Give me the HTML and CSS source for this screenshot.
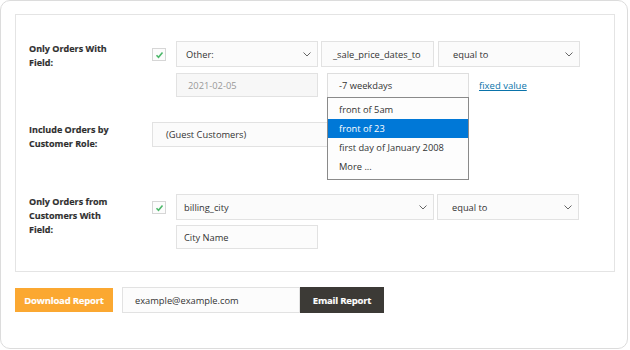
FILE: index.html
```html
<!DOCTYPE html>
<html>
<head>
<meta charset="utf-8">
<link rel="stylesheet" href="styles.css">
</head>
<body>
<div class="card">
  <div class="panel">
    <div class="row row-one">
      <div class="label">Only Orders With<br>Field:</div>
      <div class="check-cell"><span class="check"><svg width="9" height="8" viewBox="0 0 9 8"><polyline points="1.5,4.2 3.5,6.2 7.5,1.5" fill="none" stroke="#4cb86a" stroke-width="1.6"/></svg></span></div>
      <div class="controls">
        <div class="line">
          <div class="select sel-other"><span>Other:</span><svg class="chev" width="8" height="5" viewBox="0 0 8 5"><polyline points="0.5,0.5 4,4 7.5,0.5" fill="none" stroke="#666" stroke-width="1"/></svg></div>
          <div class="input in-meta">_sale_price_dates_to</div>
          <div class="select sel-eq"><span>equal to</span><svg class="chev" width="8" height="5" viewBox="0 0 8 5"><polyline points="0.5,0.5 4,4 7.5,0.5" fill="none" stroke="#666" stroke-width="1"/></svg></div>
        </div>
        <div class="line line-two">
          <div class="input in-date">2021-02-05</div>
          <div class="combo">
            <div class="input in-rel">-7 weekdays</div>
            <ul class="dropdown">
              <li>front of 5am</li>
              <li class="active">front of 23</li>
              <li>first day of January 2008</li>
              <li>More ...</li>
            </ul>
          </div>
          <a class="fixed" href="#">fixed value</a>
        </div>
      </div>
    </div>
    <div class="row row-two">
      <div class="label">Include Orders by<br>Customer Role:</div>
      <div class="select sel-role"><span>(Guest Customers)</span></div>
    </div>
    <div class="row row-three">
      <div class="label">Only Orders from<br>Customers With<br>Field:</div>
      <div class="check-cell"><span class="check"><svg width="9" height="8" viewBox="0 0 9 8"><polyline points="1.5,4.2 3.5,6.2 7.5,1.5" fill="none" stroke="#4cb86a" stroke-width="1.6"/></svg></span></div>
      <div class="controls">
        <div class="line">
          <div class="select sel-city"><span>billing_city</span><svg class="chev" width="8" height="5" viewBox="0 0 8 5"><polyline points="0.5,0.5 4,4 7.5,0.5" fill="none" stroke="#666" stroke-width="1"/></svg></div>
          <div class="select sel-eq"><span>equal to</span><svg class="chev" width="8" height="5" viewBox="0 0 8 5"><polyline points="0.5,0.5 4,4 7.5,0.5" fill="none" stroke="#666" stroke-width="1"/></svg></div>
        </div>
        <div class="line line-two-b">
          <div class="input in-cityname">City Name</div>
        </div>
      </div>
    </div>
  </div>
  <div class="actions">
    <button class="btn btn-download">Download Report</button>
    <div class="email-group">
      <div class="input in-email">example@example.com</div>
      <button class="btn btn-email">Email Report</button>
    </div>
  </div>
</div>
</body>
</html>
```
FILE: styles.css
```css
* { box-sizing: border-box; }
body {
  margin: 0;
  background: #fff;
  font-family: "Open Sans", "Liberation Sans", sans-serif;
  font-size: 9.3px;
  color: #333;
}
.card {
  width: 628px;
  height: 349px;
  border: 1px solid #dcdcdc;
  border-radius: 10px;
  padding: 13px 0 0 14px;
}
.panel {
  width: 600px;
  border: 1px solid #e4e4e4;
  padding: 26px 0 22px 13px;
}
.row {
  display: flex;
  align-items: flex-start;
}
.row-one { margin-bottom: 25px; }
.row-two { margin-bottom: 43px; }
.label {
  width: 123px;
  flex: none;
  font-weight: 700;
  font-size: 9px;
  line-height: 14px;
  color: #2e2e2e;
  padding-top: 1px;
  -webkit-text-stroke: 0.15px #2e2e2e;
}
.check-cell {
  width: 24px;
  flex: none;
  padding-top: 7px;
}
.check {
  display: flex;
  align-items: center;
  justify-content: center;
  width: 14px;
  height: 13px;
  border: 1px solid #d6d6d6;
  background: #fcfcfc;
}
.controls {
  display: flex;
  flex-direction: column;
  gap: 6px;
}
.line {
  display: flex;
  align-items: flex-start;
  gap: 3px;
}
.select, .input {
  height: 26px;
  border: 1px solid #e2e2e2;
  background: #fbfbfb;
  display: flex;
  align-items: center;
  color: #333;
  font-size: 9.3px;
  white-space: nowrap;
}
.select {
  justify-content: space-between;
  padding-right: 6px;
}
.sel-other { width: 142px; padding-left: 9px; }
.in-meta { width: 113px; padding-left: 11px; margin-right: 1px; }
.sel-eq { width: 142px; padding-left: 14px; }
.line-two { gap: 0; height: 24px; }
.in-date { width: 142px; height: 24px; padding-left: 11px; color: #999; background: #f7f7f7; margin-right: 9px; }
.combo { position: relative; width: 142px; }
.in-rel { width: 142px; height: 25px; padding-left: 11px; background: #fcfcfc; border-color: #dedede; }
.dropdown {
  position: absolute;
  left: 0;
  top: 24px;
  width: 142px;
  margin: 0;
  padding: 2px 0 3px;
  list-style: none;
  border: 1px solid #8a8a8a;
  background: #fdfdfd;
  z-index: 5;
}
.dropdown li {
  height: 19px;
  line-height: 19px;
  padding-left: 11px;
  color: #333;
  white-space: nowrap;
}
.dropdown li.active {
  background: #0078d7;
  color: #fff;
}
.fixed {
  margin-left: 10px;
  margin-top: 6px;
  color: #0a73aa;
  text-decoration: underline;
  font-size: 9.5px;
}
.sel-role {
  width: 317px;
  height: 25px;
  padding-left: 13px;
}
.sel-city { width: 258px; height: 26px; padding-left: 7px; }
.row-three .sel-eq { height: 26px; }
.row-three .line { gap: 3px; }
.line-two-b { margin-top: -1px; }
.in-cityname { width: 142px; height: 24px; padding-left: 7px; background: #fcfcfc; }
.actions {
  display: flex;
  align-items: center;
  gap: 9px;
  margin-top: 15px;
}
.btn {
  border: none;
  font-family: "Open Sans", "Liberation Sans", sans-serif;
  font-weight: 700;
  font-size: 9.5px;
  color: #fff;
  padding: 0;
  letter-spacing: -0.2px;
  -webkit-text-stroke: 0.15px #fff;
}
.btn-download {
  width: 98px;
  height: 24px;
  background: #fba831;
}
.email-group { display: flex; }
.in-email {
  width: 178px;
  height: 26px;
  padding-left: 12px;
  background: #fcfcfc;
}
.btn-email {
  width: 84px;
  height: 26px;
  background: #3c3a36;
}
```
